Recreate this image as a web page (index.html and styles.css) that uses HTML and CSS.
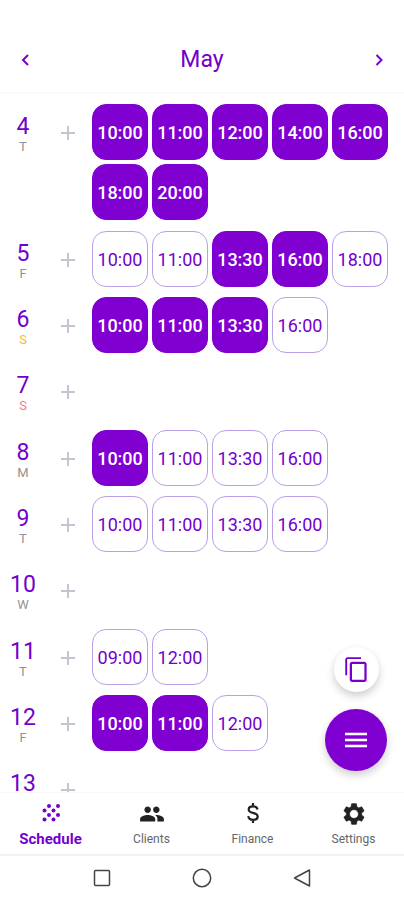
FILE: index.html
```html
<!DOCTYPE html>
<html lang="en">
<head>
<meta charset="utf-8">
<meta name="viewport" content="width=device-width, initial-scale=1">
<title>Schedule</title>
<link rel="stylesheet" href="styles.css">
</head>
<body>
<header class="header">
  <button class="arrow" aria-label="Previous month"><svg width="24" height="24" viewBox="0 0 24 24"><path d="M15 7l-5 5 5 5"/></svg></button>
  <h1 class="month">May</h1>
  <button class="arrow" aria-label="Next month"><svg width="24" height="24" viewBox="0 0 24 24"><path d="M9.500 7l5 5-5 5"/></svg></button>
</header>

<main class="schedule">
  <div class="days">
    <section class="day">
      <div class="date"><span class="number">4</span><span class="weekday">T</span></div>
      <button class="add" aria-label="Add time"><svg width="14" height="14" viewBox="0 0 14 14"><path d="M7 0v14M0 7h14"/></svg></button>
      <div class="slots"><button class="slot booked">10:00</button><button class="slot booked">11:00</button><button class="slot booked">12:00</button><button class="slot booked">14:00</button><button class="slot booked">16:00</button><button class="slot booked">18:00</button><button class="slot booked">20:00</button></div>
    </section>
    <section class="day">
      <div class="date"><span class="number">5</span><span class="weekday">F</span></div>
      <button class="add" aria-label="Add time"><svg width="14" height="14" viewBox="0 0 14 14"><path d="M7 0v14M0 7h14"/></svg></button>
      <div class="slots"><button class="slot">10:00</button><button class="slot">11:00</button><button class="slot booked">13:30</button><button class="slot booked">16:00</button><button class="slot">18:00</button></div>
    </section>
    <section class="day">
      <div class="date"><span class="number">6</span><span class="weekday saturday">S</span></div>
      <button class="add" aria-label="Add time"><svg width="14" height="14" viewBox="0 0 14 14"><path d="M7 0v14M0 7h14"/></svg></button>
      <div class="slots"><button class="slot booked">10:00</button><button class="slot booked">11:00</button><button class="slot booked">13:30</button><button class="slot">16:00</button></div>
    </section>
    <section class="day">
      <div class="date"><span class="number">7</span><span class="weekday sunday">S</span></div>
      <button class="add" aria-label="Add time"><svg width="14" height="14" viewBox="0 0 14 14"><path d="M7 0v14M0 7h14"/></svg></button>
    </section>
    <section class="day">
      <div class="date"><span class="number">8</span><span class="weekday">M</span></div>
      <button class="add" aria-label="Add time"><svg width="14" height="14" viewBox="0 0 14 14"><path d="M7 0v14M0 7h14"/></svg></button>
      <div class="slots"><button class="slot booked">10:00</button><button class="slot">11:00</button><button class="slot">13:30</button><button class="slot">16:00</button></div>
    </section>
    <section class="day">
      <div class="date"><span class="number">9</span><span class="weekday">T</span></div>
      <button class="add" aria-label="Add time"><svg width="14" height="14" viewBox="0 0 14 14"><path d="M7 0v14M0 7h14"/></svg></button>
      <div class="slots"><button class="slot">10:00</button><button class="slot">11:00</button><button class="slot">13:30</button><button class="slot">16:00</button></div>
    </section>
    <section class="day">
      <div class="date"><span class="number">10</span><span class="weekday">W</span></div>
      <button class="add" aria-label="Add time"><svg width="14" height="14" viewBox="0 0 14 14"><path d="M7 0v14M0 7h14"/></svg></button>
    </section>
    <section class="day">
      <div class="date"><span class="number">11</span><span class="weekday">T</span></div>
      <button class="add" aria-label="Add time"><svg width="14" height="14" viewBox="0 0 14 14"><path d="M7 0v14M0 7h14"/></svg></button>
      <div class="slots"><button class="slot">09:00</button><button class="slot">12:00</button></div>
    </section>
    <section class="day">
      <div class="date"><span class="number">12</span><span class="weekday">F</span></div>
      <button class="add" aria-label="Add time"><svg width="14" height="14" viewBox="0 0 14 14"><path d="M7 0v14M0 7h14"/></svg></button>
      <div class="slots"><button class="slot booked">10:00</button><button class="slot booked">11:00</button><button class="slot">12:00</button></div>
    </section>
    <section class="day">
      <div class="date"><span class="number">13</span></div>
      <button class="add" aria-label="Add time"><svg width="14" height="14" viewBox="0 0 14 14"><path d="M7 0v14M0 7h14"/></svg></button>
    </section>
  </div>
  <div class="actions">
    <button class="copy" aria-label="Copy schedule"><svg width="27" height="27" viewBox="0 0 24 24" fill="#7900cc"><path d="M16 1H4c-1.100 0-2 .9-2 2v14h1.700V2.700H16V1zm3 4H8c-1.100 0-2 .9-2 2v14c0 1.100.9 2 2 2h11c1.100 0 2-.9 2-2V7c0-1.100-.9-2-2-2zm0 16H8V7h11v14z"/></svg></button>
    <button class="menu" aria-label="Menu"><svg width="22" height="16" viewBox="0 0 22 16"><path d="M0 2h22M0 8h22M0 14h22" stroke="#fff" stroke-width="2.600"/></svg></button>
  </div>
</main>

<nav class="tabs">
  <a class="tab active" href="#schedule">
    <svg width="24" height="24" viewBox="0 0 24 24" fill="currentColor"><circle cx="10" cy="5" r="2"/><circle cx="19" cy="5" r="2"/><circle cx="5.500" cy="9.500" r="2"/><circle cx="14.500" cy="9.500" r="2"/><circle cx="10" cy="14" r="2"/><circle cx="19" cy="14" r="2"/><circle cx="5.500" cy="18.500" r="2"/><circle cx="14.500" cy="18.500" r="2"/></svg>
    Schedule
  </a>
  <a class="tab" href="#clients">
    <svg width="26" height="26" viewBox="0 0 24 24" fill="#222"><path d="M16 11c1.660 0 2.990-1.340 2.990-3S17.660 5 16 5s-3 1.340-3 3 1.340 3 3 3zm-8 0c1.660 0 2.990-1.340 2.990-3S9.660 5 8 5 5 6.340 5 8s1.340 3 3 3zm0 2c-2.330 0-7 1.170-7 3.500V19h14v-2.500C15 14.170 10.330 13 8 13zm8 0c-.29 0-.62.02-.97.050C16.190 13.890 17 15.020 17 16.500V19h6v-2.500c0-2.330-4.670-3.500-7-3.500z"/></svg>
    Clients
  </a>
  <a class="tab" href="#finance">
    <svg width="24" height="24" viewBox="0 0 24 24" fill="none" stroke="#222" stroke-width="2.200"><path d="M16.500 8.500C16.200 6.300 14.500 5.300 12 5.300c-2.700 0-4.300 1.200-4.300 3.100 0 2.100 1.700 2.900 4.300 3.500 3 .7 4.700 1.700 4.700 3.800 0 2-1.900 3.100-4.500 3.100-2.900 0-4.700-1.300-4.900-3.700M12 2v3.500M12 18.500V22"/></svg>
    Finance
  </a>
  <a class="tab" href="#settings">
    <svg width="26" height="26" viewBox="0 0 24 24" fill="#222" stroke="#222" stroke-width=".4"><path d="M19.140 12.940c.04-.3.060-.61.060-.94 0-.32-.02-.64-.07-.94l2.030-1.580c.18-.14.23-.41.120-.61l-1.920-3.320c-.12-.22-.37-.29-.59-.22l-2.390.96c-.5-.38-1.030-.7-1.620-.94l-.36-2.540c-.04-.24-.24-.41-.48-.41h-3.840c-.24 0-.43.17-.47.41l-.36 2.540c-.59.24-1.130.57-1.620.94l-2.390-.96c-.22-.08-.47 0-.59.22L2.740 8.870c-.12.21-.08.47.12.61l2.030 1.580c-.05.3-.09.63-.09.94s.02.64.070.94l-2.030 1.580c-.18.14-.23.41-.12.610l1.920 3.320c.12.22.37.29.59.22l2.390-.96c.5.38 1.030.7 1.620.94l.36 2.540c.05.24.24.41.48.41h3.840c.24 0 .44-.17.47-.41l.36-2.540c.59-.24 1.130-.56 1.620-.94l2.390.96c.22.08.47 0 .59-.22l1.920-3.320c.12-.22.070-.47-.12-.61l-2.010-1.580zM12 16c-2.200 0-4-1.800-4-4s1.800-4 4-4 4 1.800 4 4-1.800 4-4 4z"/></svg>
    Settings
  </a>
</nav>

<footer class="system">
  <button aria-label="Recent apps"><svg width="20" height="20" viewBox="0 0 20 20"><rect x="2.500" y="2.500" width="15" height="15" rx="1"/></svg></button>
  <button aria-label="Home"><svg width="20" height="20" viewBox="0 0 20 20"><circle cx="10" cy="10" r="8.700"/></svg></button>
  <button aria-label="Back"><svg width="20" height="20" viewBox="0 0 20 20"><path d="M17.500 2v16L2.500 10z" stroke-linejoin="round"/></svg></button>
</footer>
</body>
</html>
```
FILE: styles.css
```css
* {
  box-sizing: border-box;
}

body {
  margin: 0;
  height: 100vh;
  display: flex;
  flex-direction: column;
  background: #fff;
  color: #7400cc;
  font-family: Roboto, sans-serif;
}

button {
  margin: 0;
  padding: 0;
  border: 0;
  background: none;
  color: inherit;
  font: inherit;
  display: grid;
  place-items: center;
}

.header {
  flex: none;
  display: flex;
  align-items: center;
  justify-content: space-between;
  padding: 40px 13px 12px;
  border-bottom: 2px solid #fafafa;
}

.month {
  margin: 0;
  font-size: 23px;
  line-height: 40px;
  font-weight: 400;
}

.arrow svg {
  fill: none;
  stroke: #7900cc;
  stroke-width: 2;
}

.schedule {
  flex: 1;
  min-height: 0;
  position: relative;
}

.days {
  height: 100%;
  overflow: hidden;
  padding-top: 10px;
}

.day {
  display: grid;
  grid-template-columns: 46px 44px 1fr;
  align-items: start;
  min-height: 56px;
  margin-bottom: 10px;
}

.day:nth-child(3n + 1) {
  margin-bottom: 11px;
}

.date {
  display: flex;
  flex-direction: column;
  align-items: center;
  padding-top: 10px;
}

.number {
  font-size: 23px;
  line-height: 26px;
}

.weekday {
  font-size: 13px;
  line-height: 14px;
  color: #929292;
}

.saturday {
  color: #f9b92e;
}

.sunday {
  color: #f47a92;
}

.add {
  height: 56px;
  padding-top: 2px;
}

.add path {
  stroke: #c9c3d1;
  stroke-width: 2;
}

.slots {
  display: flex;
  flex-wrap: wrap;
  gap: 4px;
  padding-left: 2px;
}

.slot {
  width: 56px;
  height: 56px;
  padding-top: 2px;
  border: 1px solid #b9a0e6;
  border-radius: 14px;
  font-size: 18px;
  line-height: 20px;
}

.booked {
  border-color: #8000d2;
  background: #8000d2;
  color: #fff;
  font-weight: 500;
}

.actions {
  position: absolute;
  right: 17px;
  bottom: 21px;
  display: flex;
  flex-direction: column;
  align-items: center;
  gap: 17px;
}

.copy,
.menu {
  border-radius: 50%;
  box-shadow: 0 4px 8px rgba(0, 0, 0, 0.2);
}

.copy {
  width: 45px;
  height: 45px;
  background: #fff;
}

.menu {
  width: 62px;
  height: 62px;
  background: #8000d2;
}

.tabs {
  flex: none;
  display: grid;
  grid-template-columns: repeat(4, 1fr);
  padding: 8px 0 7px;
  border-top: 1px solid #f8f8f8;
  border-bottom: 2px solid #f2f2f2;
}

.tab {
  display: flex;
  flex-direction: column;
  align-items: center;
  justify-content: space-between;
  height: 46px;
  color: #666;
  font-size: 12px;
  line-height: 16px;
  text-decoration: none;
}

.active {
  color: #7400cc;
  font-size: 15px;
  font-weight: 700;
}

.system {
  flex: none;
  display: grid;
  grid-template-columns: repeat(3, 100px);
  justify-content: center;
  height: 44px;
}

.system svg {
  fill: none;
  stroke: #444;
  stroke-width: 1.5;
}
```
